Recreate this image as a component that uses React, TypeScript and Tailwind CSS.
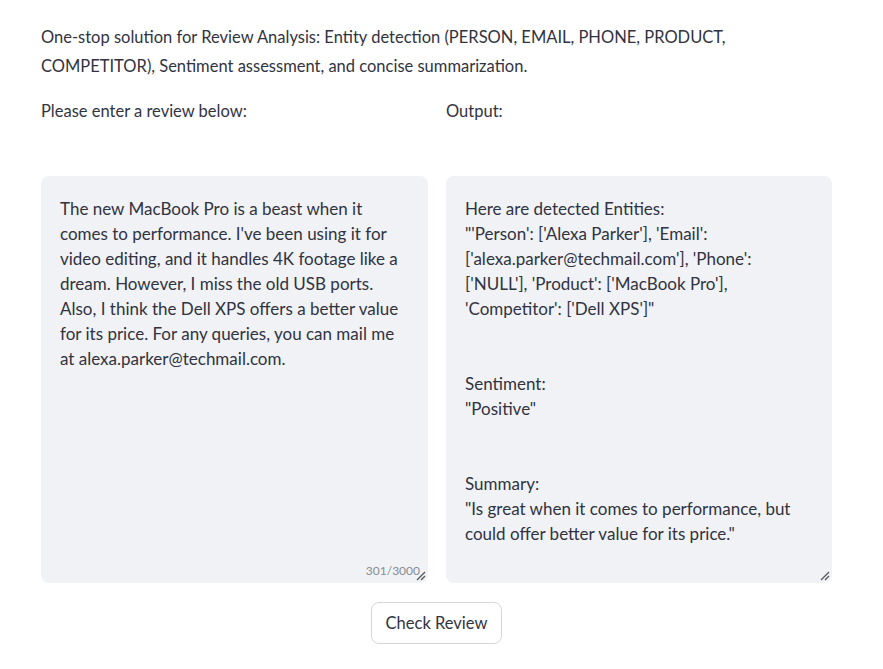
import React from "react";

const font = { fontFamily: "Lato, 'Noto Sans', sans-serif" };

function Handle() {
  return (
    <svg width="10" height="10" viewBox="0 0 10 10" className="absolute right-[2px] bottom-[2px]">
      <line x1="1" y1="9" x2="9" y2="1" stroke="#555" strokeWidth="1.2" />
      <line x1="5" y1="9" x2="9" y2="5" stroke="#555" strokeWidth="1.2" />
    </svg>
  );
}

function Lines({ lines }: { lines: string[] }) {
  return (
    <div className="text-[17px] leading-[25px] text-[#31333f]">
      {lines.map((l, i) => (
        <div key={i} className="whitespace-nowrap h-[25px]">
          {l || "\u00a0"}
        </div>
      ))}
    </div>
  );
}

export default function App() {
  const left = [
    "The new MacBook Pro is a beast when it",
    "comes to performance. I've been using it for",
    "video editing, and it handles 4K footage like a",
    "dream. However, I miss the old USB ports.",
    "Also, I think the Dell XPS offers a better value",
    "for its price. For any queries, you can mail me",
    "at alexa.parker@techmail.com.",
  ];
  const right = [
    "Here are detected Entities:",
    "\"'Person': ['Alexa Parker'], 'Email':",
    "['alexa.parker@techmail.com'], 'Phone':",
    "['NULL'], 'Product': ['MacBook Pro'],",
    "'Competitor': ['Dell XPS']\"",
    "",
    "",
    "Sentiment:",
    "\"Positive\"",
    "",
    "",
    "Summary:",
    "\"Is great when it comes to performance, but",
    "could offer better value for its price.\"",
  ];
  return (
    <div className="w-[883px] h-[669px] bg-white text-[#31333f]" style={font}>
      <div className="pl-[41px] pr-[51px] pt-[23px]">
        <p className="text-[16.5px] leading-[29px] m-0">
          <span className="block whitespace-nowrap">One-stop solution for Review Analysis: Entity detection (PERSON, EMAIL, PHONE, PRODUCT,</span>
          <span className="block whitespace-nowrap">COMPETITOR), Sentiment assessment, and concise summarization.</span>
        </p>
        <div className="grid grid-cols-[387px_386px] gap-x-[18px] mt-[18px]">
          <div className="text-[16.5px] leading-[24px] h-[77px]">Please enter a review below:</div>
          <div className="text-[16.5px] leading-[24px] h-[77px]">Output:</div>
          <div className="relative h-[407px] bg-[#f0f2f6] rounded-[8px] pl-[19px] pr-[12px] pt-[20px]">
            <Lines lines={left} />
            <span className="absolute right-[8px] bottom-[3px] text-[12px] text-[#8a8c94]">301/3000</span>
            <Handle />
          </div>
          <div className="relative h-[407px] bg-[#f0f2f6] rounded-[8px] pl-[19px] pr-[12px] pt-[20px]">
            <Lines lines={right} />
            <Handle />
          </div>
        </div>
        <div className="flex justify-center mt-[19px]">
          <button className="h-[42px] px-[14px] border border-[#d6d6d9] rounded-[8px] bg-white text-[16.5px] text-[#31333f]">
            Check Review
          </button>
        </div>
      </div>
    </div>
  );
}
